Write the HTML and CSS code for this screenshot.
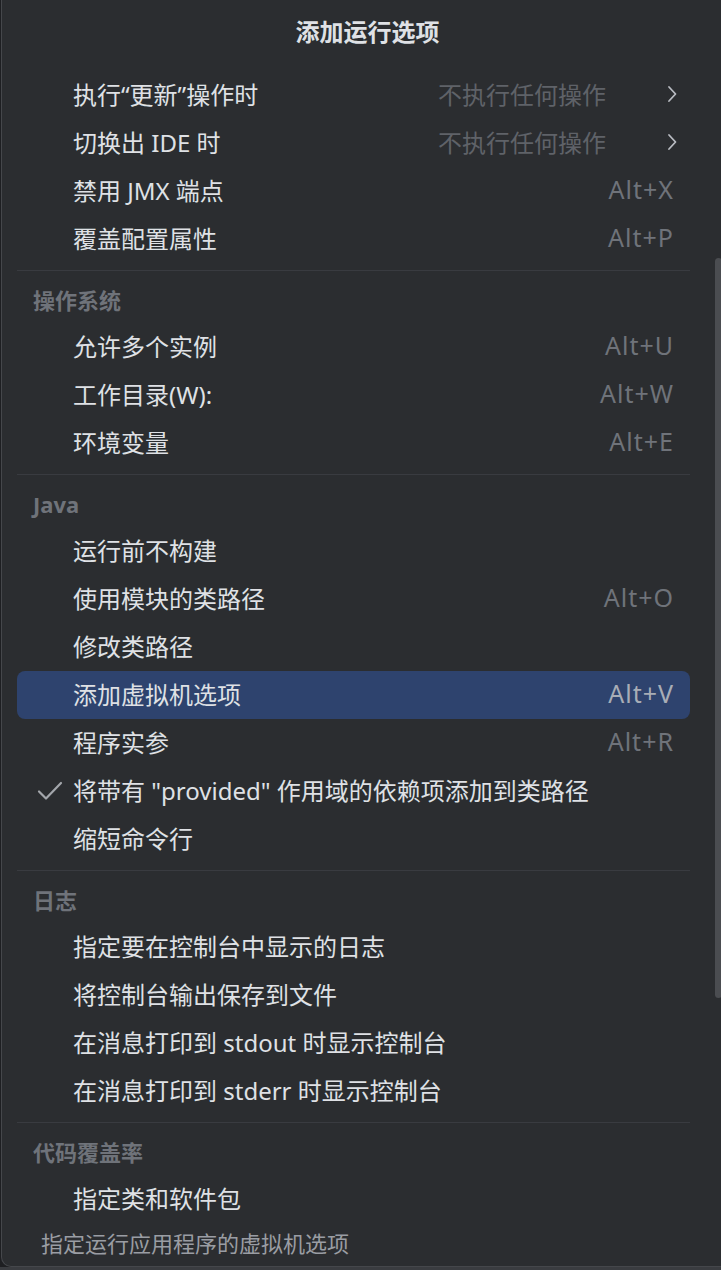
FILE: index.html
```html
<!DOCTYPE html>
<html lang="zh-CN">
<head>
<meta charset="utf-8">
<title>添加运行选项</title>
<link rel="stylesheet" href="styles.css">
</head>
<body>
<div class="popup">
  <div class="title">添加运行选项</div>
  <div class="list">
    <div class="item"><span class="gutter"></span><span class="label">执行“更新”操作时</span><span class="value">不执行任何操作</span><svg class="chev" viewBox="0 0 12 20" width="12" height="20"><path d="M3 3 L9.5 10 L3 17" fill="none" stroke="#b9bcc2" stroke-width="1.8" stroke-linecap="round" stroke-linejoin="round"/></svg></div>
    <div class="item"><span class="gutter"></span><span class="label">切换出 IDE 时</span><span class="value">不执行任何操作</span><svg class="chev" viewBox="0 0 12 20" width="12" height="20"><path d="M3 3 L9.5 10 L3 17" fill="none" stroke="#b9bcc2" stroke-width="1.8" stroke-linecap="round" stroke-linejoin="round"/></svg></div>
    <div class="item"><span class="gutter"></span><span class="label">禁用 JMX 端点</span><span class="key">Alt+X</span></div>
    <div class="item"><span class="gutter"></span><span class="label">覆盖配置属性</span><span class="key">Alt+P</span></div>

    <div class="sep"></div>
    <div class="header">操作系统</div>
    <div class="item"><span class="gutter"></span><span class="label">允许多个实例</span><span class="key">Alt+U</span></div>
    <div class="item"><span class="gutter"></span><span class="label">工作目录(W):</span><span class="key">Alt+W</span></div>
    <div class="item"><span class="gutter"></span><span class="label">环境变量</span><span class="key">Alt+E</span></div>

    <div class="sep"></div>
    <div class="header">Java</div>
    <div class="item"><span class="gutter"></span><span class="label">运行前不构建</span></div>
    <div class="item"><span class="gutter"></span><span class="label">使用模块的类路径</span><span class="key">Alt+O</span></div>
    <div class="item"><span class="gutter"></span><span class="label">修改类路径</span></div>
    <div class="item selected"><span class="gutter"></span><span class="label">添加虚拟机选项</span><span class="key">Alt+V</span></div>
    <div class="item"><span class="gutter"></span><span class="label">程序实参</span><span class="key">Alt+R</span></div>
    <div class="item"><span class="gutter"><svg viewBox="0 0 26 22" width="26" height="22"><path d="M2 11.5 L9 18.5 L24 3" fill="none" stroke="#a3a6ab" stroke-width="2.2" stroke-linecap="round" stroke-linejoin="round"/></svg></span><span class="label">将带有 "provided" 作用域的依赖项添加到类路径</span></div>
    <div class="item"><span class="gutter"></span><span class="label">缩短命令行</span></div>

    <div class="sep"></div>
    <div class="header">日志</div>
    <div class="item"><span class="gutter"></span><span class="label">指定要在控制台中显示的日志</span></div>
    <div class="item"><span class="gutter"></span><span class="label">将控制台输出保存到文件</span></div>
    <div class="item"><span class="gutter"></span><span class="label">在消息打印到 stdout 时显示控制台</span></div>
    <div class="item"><span class="gutter"></span><span class="label">在消息打印到 stderr 时显示控制台</span></div>

    <div class="sep"></div>
    <div class="header">代码覆盖率</div>
    <div class="item"><span class="gutter"></span><span class="label">指定类和软件包</span></div>
  </div>
  <div class="footer">指定运行应用程序的虚拟机选项</div>
  <div class="scrollbar"></div>
</div>
<div class="strip"></div>
</body>
</html>
```

FILE: styles.css
```css
html, body {
  margin: 0;
  padding: 0;
}
body {
  background: #1e1f22;
  width: 721px;
  height: 1270px;
  overflow: hidden;
  font-family: "Noto Sans", "Noto Sans CJK SC", sans-serif;
  color: #dfe1e5;
}
.popup {
  position: relative;
  box-sizing: border-box;
  height: 1267px;
  margin-left: 1px;
  background: #2b2d30;
  border-left: 1px solid #45474b;
  border-bottom: 1px solid #45474b;
  border-bottom-left-radius: 10px;
  display: flex;
  flex-direction: column;
}
.strip {
  height: 3px;
  background: #3a3c40;
}
.title {
  height: 60px;
  margin-bottom: 11px;
  padding-left: 12px;
  display: flex;
  align-items: center;
  justify-content: center;
  font-size: 24px;
  font-weight: 700;
  color: #dfe1e5;
}
.list {
  padding: 0 31px 0 15px;
  display: flex;
  flex-direction: column;
}
.item {
  box-sizing: border-box;
  height: 48px;
  display: flex;
  align-items: center;
  padding: 0 17px 4px 20px;
  border-radius: 8px;
  font-size: 24px;
  color: #dfe1e5;
}
.item.selected {
  background: #2e436e;
}
.gutter {
  width: 36px;
  flex: 0 0 36px;
  display: flex;
  align-items: center;
  padding-top: 4px;
}
.label {
  flex: 1;
  white-space: nowrap;
}
.value {
  color: #5f6268;
  margin-right: 60px;
}
.chev {
  margin-right: -5px;
  margin-top: 2px;
}
.key {
  color: #6f737a;
  font-size: 25px;
  letter-spacing: 1px;
  margin-right: -1px;
}
.item.selected .key {
  color: #a8adb6;
}
.sep {
  height: 1px;
  background: #393b40;
  margin-top: 7px;
}
.header {
  height: 52px;
  box-sizing: border-box;
  padding: 16px 0 0 16px;
  font-size: 22px;
  line-height: 26px;
  font-weight: 700;
  color: #6f737a;
}
.footer {
  padding: 7px 0 0 39px;
  font-size: 22px;
  line-height: 26px;
  color: #9a9da3;
}
.scrollbar {
  position: absolute;
  right: -1px;
  top: 258px;
  width: 7px;
  height: 740px;
  border-radius: 4px;
  background: #4b4d51;
}
```
